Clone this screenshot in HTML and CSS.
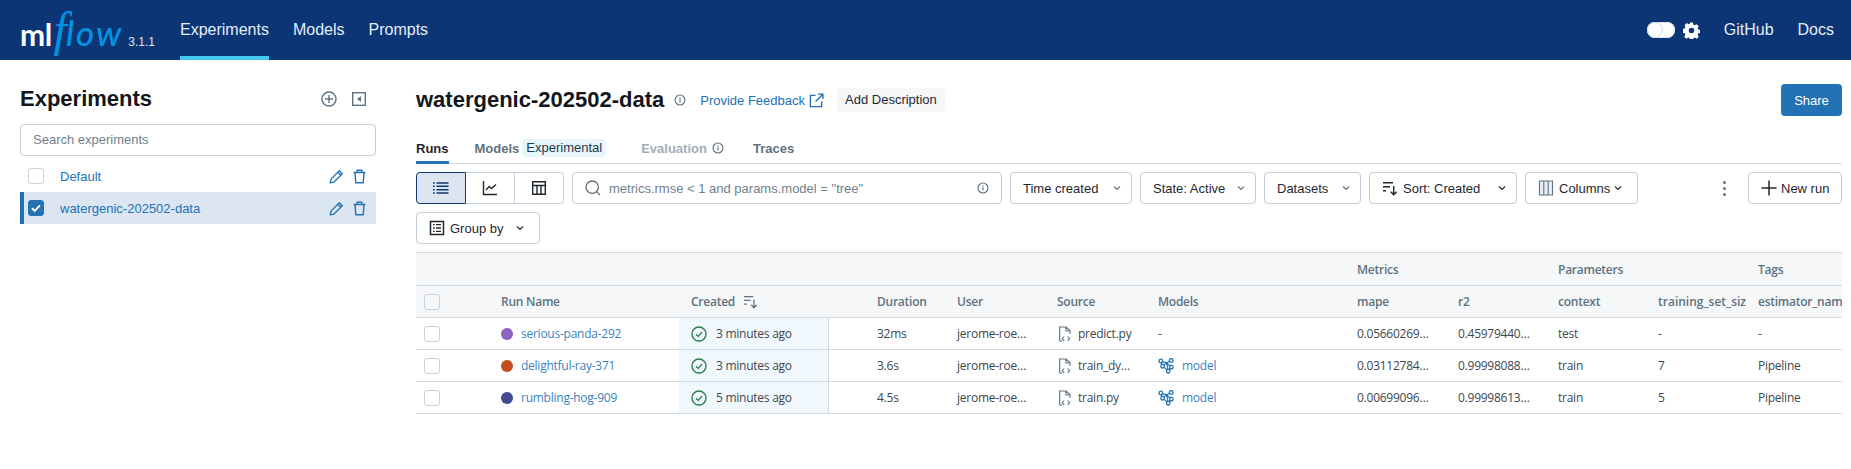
FILE: index.html
```html
<!DOCTYPE html>
<html lang="en">
<head>
  <meta charset="UTF-8">
  <title>MLflow Experiments</title>
  <link rel="stylesheet" href="styles.css">
</head>
<body>

  <svg class="iconDefs">
    <symbol id="i-info" viewBox="0 0 16 16"><circle cx="8" cy="8" r="6.600" fill="none" stroke="currentColor" stroke-width="1.500"/><rect x="7.200" y="7" width="1.600" height="4.200" fill="currentColor"/><rect x="7.200" y="4.400" width="1.600" height="1.600" fill="currentColor"/></symbol>
    <symbol id="i-pencil" viewBox="0 0 16 16"><path d="M11 1.800l3.200 3.200-8.900 8.900-4 .9.800-4z M9.400 3.400l3.200 3.200" fill="none" stroke="currentColor" stroke-width="1.400" stroke-linejoin="round"/></symbol>
    <symbol id="i-trash" viewBox="0 0 16 16"><path d="M1.600 3.700h12.800 M5.400 3.500V1.400h5.200v2.100 M3.200 3.700l.8 11h8l.8-11" fill="none" stroke="currentColor" stroke-width="1.500" stroke-linejoin="round"/></symbol>
    <symbol id="i-chevron" viewBox="0 0 16 16"><path d="M4 6l4 4 4-4" fill="none" stroke="currentColor" stroke-width="1.500"/></symbol>
    <symbol id="i-sort" viewBox="0 0 16 16"><path d="M1 2.700h10 M1 6.700h7 M1 10.700h3 M11.700 6v8.600 M8.800 11.800l2.900 2.900 2.900-2.900" fill="none" stroke="currentColor" stroke-width="1.400"/></symbol>
    <symbol id="i-check" viewBox="0 0 16 16"><circle cx="8" cy="8" r="7" fill="none" stroke="currentColor" stroke-width="1.300"/><path d="M5 8.200l2.200 2.200L11 6.200" fill="none" stroke="currentColor" stroke-width="1.300"/></symbol>
    <symbol id="i-file" viewBox="0 0 16 16"><path d="M5 15H2.700V1h6.500l3.800 3.800V8 M9 1v4h4 M7.200 10.500L5.200 12.700l2 2.100 M10.600 10.500l2 2.200-2 2.100" fill="none" stroke="currentColor" stroke-width="1.100"/></symbol>
    <symbol id="i-model" viewBox="0 0 16 16"><path d="M3 3.200l5.600 1.600 4.600-2.400 M3 3.200l1.600 5 5.600 4.400 M4.600 8.200l4-3.400 4.600 4.400-3 3.400 M8.600 4.800l1.600 7.800" fill="none" stroke="currentColor" stroke-width="1.200"/><g fill="#fff" stroke="currentColor" stroke-width="1.300"><circle cx="2.800" cy="3" r="1.800"/><circle cx="13.200" cy="2.400" r="1.800"/><circle cx="4.600" cy="8.200" r="1.800"/><circle cx="13.400" cy="9.200" r="1.800"/><circle cx="10.200" cy="13.200" r="1.800"/></g></symbol>
  </svg>

  <header class="topBar">
    <div class="logo"><span class="logoMl">ml</span><span class="logoF">f</span><span class="logoFlow">low</span><span class="logoVersion">3.1.1</span></div>
    <nav class="topNav">
      <a class="navItem navItemActive">Experiments</a>
      <a class="navItem">Models</a>
      <a class="navItem">Prompts</a>
    </nav>
    <div class="topRight">
      <span class="toggle"><span class="toggleKnob"></span></span>
      <svg class="gear" viewBox="0 0 16 16"><path fill="#fff" fill-rule="evenodd" d="M6.600.5h2.800l.4 2 1.300.6 1.800-1.100 2 2-1.100 1.800.6 1.300 2 .4v2.800l-2 .4-.6 1.300 1.100 1.800-2 2-1.800-1.100-1.300.6-.4 2H6.600l-.4-2-1.300-.6-1.800 1.100-2-2 1.100-1.800-.6-1.300-2-.4V6.500l2-.4.6-1.300L1.500 3l2-2 1.800 1.100 1.300-.6zM8 5.400a2.600 2.600 0 1 0 0 5.200 2.600 2.600 0 0 0 0-5.200z"/></svg>
      <a class="navItem navGithub">GitHub</a>
      <a class="navItem">Docs</a>
    </div>
  </header>

  <div class="page">
    <aside class="sidebar">
      <div class="sideHead">
        <h2>Experiments</h2>
        <svg class="sideIcon" viewBox="0 0 16 16"><circle cx="8" cy="8" r="7" fill="none" stroke="currentColor" stroke-width="1.400"/><path d="M8 4v8M4 8h8" stroke="currentColor" stroke-width="1.400"/></svg>
        <svg class="sideIcon" viewBox="0 0 16 16"><rect x="1.700" y="1.700" width="12.600" height="12.600" fill="none" stroke="currentColor" stroke-width="1.400"/><path d="M10 5v6L6 8z" fill="currentColor"/></svg>
      </div>
      <div class="searchBox">Search experiments</div>
      <div class="expList">
        <div class="expRow">
          <span class="checkbox"></span>
          <a class="expName">Default</a>
          <svg class="expIcon"><use href="#i-pencil"/></svg>
          <svg class="expIcon"><use href="#i-trash"/></svg>
        </div>
        <div class="expRow expRowActive">
          <span class="checkbox checkboxOn"><svg viewBox="0 0 16 16"><path d="M3.500 8.300l3 3 6-6.300" fill="none" stroke="#fff" stroke-width="2.200"/></svg></span>
          <a class="expName">watergenic-202502-data</a>
          <svg class="expIcon"><use href="#i-pencil"/></svg>
          <svg class="expIcon"><use href="#i-trash"/></svg>
        </div>
      </div>
    </aside>

    <main class="content">
      <div class="titleRow">
        <h1>watergenic-202502-data</h1>
        <svg class="titleInfo"><use href="#i-info"/></svg>
        <a class="feedback">Provide Feedback
          <svg viewBox="0 0 16 16"><path d="M7 2.500H1.500v12h12V9 M9.500 1.200h5.300v5.300 M14.500 1.500L7 9" fill="none" stroke="currentColor" stroke-width="1.500"/></svg>
        </a>
        <span class="addDesc">Add Description</span>
        <button class="shareBtn">Share</button>
      </div>

      <div class="tabs">
        <a class="tab tabActive">Runs</a>
        <a class="tab tabModels">Models <span class="tag">Experimental</span></a>
        <a class="tab tabOff">Evaluation <svg><use href="#i-info"/></svg></a>
        <a class="tab">Traces</a>
      </div>

      <div class="toolbar">
        <div class="viewGroup">
          <span class="viewBtn viewBtnOn"><svg viewBox="0 0 16 16"><path d="M3.500 3h12M3.500 6.300h12M3.500 9.700h12M3.500 13h12M0 3h1.700M0 6.300h1.700M0 9.700h1.700M0 13h1.700" stroke="#0e3a6b" stroke-width="1.400"/></svg></span>
          <span class="viewBtn"><svg viewBox="0 0 16 16"><path d="M1.500 1v13.500H15 M4 10l3.300-3.500 2.200 2L14 4.500" fill="none" stroke="#1f272d" stroke-width="1.400"/></svg></span>
          <span class="viewBtn"><svg viewBox="0 0 16 16"><path d="M1.700 1.700h12.600v12.600H1.700z M1.700 5.500h12.600 M6 5.500v8.800 M10 5.500v8.800" fill="none" stroke="#1f272d" stroke-width="1.400"/></svg></span>
        </div>
        <div class="searchRuns">
          <svg class="searchIcon" viewBox="0 0 16 16"><circle cx="7.200" cy="7.200" r="6.200" fill="none" stroke="currentColor" stroke-width="1.300"/><path d="M11.600 11.600l3.400 3.400" stroke="currentColor" stroke-width="1.300"/></svg>
          <span class="searchText">metrics.rmse &lt; 1 and params.model = "tree"</span>
          <svg class="searchInfo"><use href="#i-info"/></svg>
        </div>
        <span class="toolBtn btnTime">Time created <svg class="chev chevLight"><use href="#i-chevron"/></svg></span>
        <span class="toolBtn btnState">State: Active <svg class="chev chevLight"><use href="#i-chevron"/></svg></span>
        <span class="toolBtn btnData">Datasets <svg class="chev chevLight"><use href="#i-chevron"/></svg></span>
        <span class="toolBtn btnSort"><svg class="btnIcon"><use href="#i-sort"/></svg> Sort: Created <svg class="chev"><use href="#i-chevron"/></svg></span>
        <span class="toolBtn btnCols"><svg class="btnIcon" viewBox="0 0 16 16"><path d="M1.500 1h13v14h-13z M5.800 1v14 M10.200 1v14" fill="#e8eef4" stroke="#5f7281" stroke-width="1.100"/></svg> Columns <svg class="chev chevTight"><use href="#i-chevron"/></svg></span>
        <span class="dots"><i></i><i></i><i></i></span>
        <span class="toolBtn btnNew"><svg class="btnIcon" viewBox="0 0 16 16"><path d="M8 0.500v15M0.500 8h15" stroke="#1f272d" stroke-width="1.500"/></svg> New run</span>
      </div>

      <div class="toolbar2">
        <span class="toolBtn btnGroup"><svg class="btnIcon" viewBox="0 0 16 16"><path d="M1.500 1.500h13v13h-13z" fill="none" stroke="#1f272d" stroke-width="1.500"/><path d="M4 4.700h1.700M7 4.700h5M4 8h1.700M7 8h5M4 11.300h1.700M7 11.300h5" stroke="#1f272d" stroke-width="1.300"/></svg> Group by <svg class="chev"><use href="#i-chevron"/></svg></span>
      </div>

      <div class="runsTable">
        <div class="row rowGroup">
          <span class="c7">Metrics</span><span class="c9">Parameters</span><span class="c11">Tags</span>
        </div>
        <div class="row rowHead">
          <span class="cellCheck"><span class="checkbox checkboxGrey"></span></span>
          <span class="cellName">Run Name</span>
          <span>Created <svg class="headSort"><use href="#i-sort"/></svg></span>
          <span class="cellDur">Duration</span>
          <span>User</span>
          <span>Source</span>
          <span>Models</span>
          <span>mape</span>
          <span>r2</span>
          <span>context</span>
          <span class="cellWide">training_set_size</span>
          <span>estimator_name</span>
        </div>

        <div class="row">
          <span class="cellCheck"><span class="checkbox"></span></span>
          <span class="cellName"><i class="dot dotPurple"></i><a>serious-panda-292</a></span>
          <span class="cellCreated"><svg class="okIcon"><use href="#i-check"/></svg>3 minutes ago</span>
          <span class="cellDur">32ms</span>
          <span>jerome-roe…</span>
          <span><svg class="fileIcon"><use href="#i-file"/></svg>predict.py</span>
          <span>-</span>
          <span>0.05660269…</span>
          <span>0.45979440…</span>
          <span>test</span>
          <span>-</span>
          <span>-</span>
        </div>
        <div class="row">
          <span class="cellCheck"><span class="checkbox"></span></span>
          <span class="cellName"><i class="dot dotOrange"></i><a>delightful-ray-371</a></span>
          <span class="cellCreated"><svg class="okIcon"><use href="#i-check"/></svg>3 minutes ago</span>
          <span class="cellDur">3.6s</span>
          <span>jerome-roe…</span>
          <span><svg class="fileIcon"><use href="#i-file"/></svg>train_dy…</span>
          <span><svg class="modelIcon"><use href="#i-model"/></svg><a>model</a></span>
          <span>0.03112784…</span>
          <span>0.99998088…</span>
          <span>train</span>
          <span>7</span>
          <span>Pipeline</span>
        </div>
        <div class="row">
          <span class="cellCheck"><span class="checkbox"></span></span>
          <span class="cellName"><i class="dot dotNavy"></i><a>rumbling-hog-909</a></span>
          <span class="cellCreated"><svg class="okIcon"><use href="#i-check"/></svg>5 minutes ago</span>
          <span class="cellDur">4.5s</span>
          <span>jerome-roe…</span>
          <span><svg class="fileIcon"><use href="#i-file"/></svg>train.py</span>
          <span><svg class="modelIcon"><use href="#i-model"/></svg><a>model</a></span>
          <span>0.00699096…</span>
          <span>0.99998613…</span>
          <span>train</span>
          <span>5</span>
          <span>Pipeline</span>
        </div>
      </div>
    </main>
  </div>

</body>
</html>
```

FILE: styles.css
```css
html, body {
  height: 100%;
  margin: 0;
  overflow: hidden;
  background: #fff;
  font-family: "Liberation Sans", Arial, sans-serif;
  font-size: 13px;
  color: #1f272d;
}

.iconDefs {
  display: none;
}

a {
  text-decoration: none;
}

/* top bar */
.topBar {
  display: flex;
  align-items: stretch;
  height: 60px;
  padding: 0 17px 0 20px;
  background: #0b3574;
  color: #e4eefa;
}

.logo {
  display: flex;
  align-items: baseline;
  width: 160px;
  padding-top: 9px;
  box-sizing: border-box;
  line-height: 42px;
  overflow: hidden;
}

.logoMl {
  font-family: Lato, sans-serif;
  font-size: 30px;
  font-weight: 700;
  color: #fff;
  letter-spacing: -0.5px;
}

.logoF {
  font-family: "Liberation Serif", serif;
  font-size: 48px;
  font-style: italic;
  color: #0194e2;
  margin-left: 2px;
}

.logoFlow {
  font-family: Lato, sans-serif;
  font-size: 35px;
  font-style: italic;
  font-weight: 500;
  color: #0194e2;
  letter-spacing: 2px;
  margin-left: -1px;
}

.logoVersion {
  font-size: 12px;
  color: #dfe5ec;
  margin-left: 5px;
}

.topNav {
  display: flex;
  gap: 24px;
}

.navItem {
  display: flex;
  align-items: center;
  font-size: 16px;
  color: #e4eefa;
  box-sizing: border-box;
  border-bottom: 4px solid transparent;
  padding-top: 4px;
}

.navItemActive {
  border-bottom-color: #43c9ed;
}

.topRight {
  display: flex;
  align-items: center;
  gap: 24px;
  margin-left: auto;
}

.toggle {
  display: flex;
  width: 28px;
  height: 16px;
  margin-right: -16px;
  border-radius: 8px;
  background: #fff;
  box-shadow: inset 0 0 0 1px #dfe5ec;
}

.toggleKnob {
  width: 16px;
  height: 16px;
  box-sizing: border-box;
  border-radius: 50%;
  background: #fff;
  border: 1px solid #cfd8e2;
}

.gear {
  width: 17px;
  height: 17px;
}

/* page */
.page {
  display: flex;
}

.sidebar {
  width: 356px;
  margin-left: 20px;
  padding-top: 24px;
}

.sideHead {
  display: flex;
  align-items: center;
  gap: 14px;
  height: 30px;
  padding-right: 9px;
}

.sideHead h2 {
  flex: 1;
  margin: 0;
  font-size: 22px;
  color: #11171c;
}

.sideIcon {
  width: 16px;
  height: 16px;
  color: #5f7281;
}

.searchBox {
  height: 32px;
  margin-top: 10px;
  padding-left: 12px;
  line-height: 30px;
  box-sizing: border-box;
  border: 1px solid #c0cdd8;
  border-radius: 4px;
  color: #6f7f8c;
}

.expList {
  margin-top: 4px;
}

.expRow {
  display: flex;
  align-items: center;
  gap: 8px;
  height: 32px;
  padding: 0 9px 0 8px;
}

.expRowActive {
  background: #dbe6f2;
  box-shadow: inset 4px 0 0 #2272b4;
}

.expName {
  flex: 1;
  margin-left: 8px;
  color: #2272b4;
}

.expIcon {
  width: 15px;
  height: 15px;
  color: #2272b4;
}

.checkbox {
  display: inline-block;
  width: 16px;
  height: 16px;
  box-sizing: border-box;
  border: 1px solid #c8d3dd;
  border-radius: 3px;
  background: #fff;
}

.checkboxOn {
  background: #2272b4;
  border-color: #2272b4;
}

.checkboxOn svg {
  display: block;
  width: 14px;
  height: 14px;
}

.checkboxGrey {
  background: #f5f7f9;
}

/* main */
.content {
  width: 1426px;
  margin-left: 40px;
}

.titleRow {
  display: flex;
  align-items: center;
  height: 32px;
  margin-top: 24px;
}

.titleRow h1 {
  margin: 0;
  font-size: 22px;
  color: #11171c;
}

.titleInfo {
  width: 12px;
  height: 12px;
  margin-left: 10px;
  color: #5f7281;
}

.feedback {
  display: flex;
  align-items: center;
  gap: 4px;
  margin-left: 14px;
  color: #2272b4;
}

.feedback svg {
  width: 15px;
  height: 15px;
}

.addDesc {
  margin-left: 13px;
  padding: 0 8px;
  line-height: 24px;
  background: #f5f7f9;
  border-radius: 4px;
}

.shareBtn {
  margin-left: auto;
  width: 61px;
  height: 32px;
  background: #2272b4;
  color: #fff;
  border: none;
  border-radius: 4px;
  font: inherit;
}

.tabs {
  display: flex;
  gap: 26px;
  height: 32px;
  margin-top: 15px;
  border-bottom: 1px solid #d1d9e1;
}

.tab {
  display: flex;
  align-items: center;
  height: 33px;
  box-sizing: border-box;
  padding-top: 1px;
  font-weight: bold;
  color: #5f7281;
}

.tabActive {
  color: #1f272d;
  border-bottom: 3px solid #2272b4;
  padding-top: 4px;
}

.tabModels {
  gap: 3px;
  margin-right: 9px;
}

.tag {
  font-weight: normal;
  color: #1f3a4d;
  background: #e6f6fb;
  padding: 0 4px;
  border-radius: 4px;
  line-height: 18px;
}

.tabOff {
  color: #a3aeb8;
  gap: 5px;
  margin-right: 3px;
}

.tabOff svg {
  width: 12px;
  height: 12px;
  color: #5f7281;
}

.toolbar {
  display: flex;
  align-items: center;
  gap: 8px;
  margin-top: 8px;
  height: 32px;
}

.toolbar2 {
  display: flex;
  margin-top: 8px;
  height: 32px;
}

.viewGroup {
  display: flex;
}

.viewBtn {
  display: flex;
  align-items: center;
  justify-content: center;
  width: 49px;
  height: 32px;
  box-sizing: border-box;
  border: 1px solid #c0cdd8;
  border-left: none;
}

.viewBtn svg {
  width: 16px;
  height: 16px;
}

.viewBtn:last-child {
  border-radius: 0 4px 4px 0;
}

.viewBtnOn {
  width: 50px;
  background: #dbe6f2;
  border: 1px solid #0e3a6b;
  border-radius: 4px 0 0 4px;
}

.searchRuns {
  display: flex;
  align-items: center;
  width: 430px;
  height: 32px;
  box-sizing: border-box;
  padding: 0 12px;
  border: 1px solid #c0cdd8;
  border-radius: 4px;
  color: #5f7281;
}

.searchIcon {
  width: 16px;
  height: 16px;
}

.searchText {
  flex: 1;
  margin-left: 8px;
  color: #6f7f8c;
}

.searchInfo {
  width: 12px;
  height: 12px;
}

.toolBtn {
  display: inline-flex;
  align-items: center;
  height: 32px;
  box-sizing: border-box;
  border: 1px solid #c0cdd8;
  border-radius: 4px;
  padding: 0 8px 0 12px;
  gap: 5px;
  white-space: nowrap;
}

.btnTime { width: 122px; justify-content: space-between; }
.btnState { width: 116px; justify-content: space-between; }
.btnData { width: 97px; justify-content: space-between; }
.btnSort { width: 148px; }
.btnCols { width: 113px; }

.btnSort .chev {
  margin-left: auto;
}

.btnIcon {
  width: 16px;
  height: 16px;
  flex: none;
}

.chev {
  width: 12px;
  height: 12px;
  flex: none;
}

.chevLight {
  color: #5f7281;
}

.chevTight {
  margin-left: -3px;
}

.dots {
  display: flex;
  flex-direction: column;
  gap: 3px;
  margin-left: auto;
  margin-right: 14px;
}

.dots i {
  width: 3px;
  height: 3px;
  border-radius: 50%;
  background: #5f7281;
}

.btnNew {
  width: 94px;
  padding-left: 12px;
  gap: 4px;
}

.btnGroup {
  width: 124px;
}

.btnGroup .chev {
  margin-left: 6px;
}

/* runs table */
.runsTable {
  margin-top: 8px;
  overflow: hidden;
  color: #3c4750;
  font-family: "Open Sans", sans-serif;
  font-size: 12px;
  letter-spacing: -0.25px;
}

.row {
  display: grid;
  grid-template-columns: 77px 186px 150px 116px 100px 101px 199px 101px 100px 100px 100px 100px;
  height: 32px;
  border-bottom: 1px solid #d1d9e1;
  box-sizing: border-box;
}

.row > span {
  display: flex;
  align-items: center;
  padding-left: 12px;
  overflow: hidden;
  white-space: nowrap;
}

.rowGroup {
  height: 34px;
  background: #f5f7f9;
  border-top: 1px solid #d1d9e1;
  color: #5f7281;
  font-weight: 600;
}

.rowHead {
  background: #f5f7f9;
  color: #5f7281;
  font-weight: 600;
}

.c7 { grid-column: 8; }
.c9 { grid-column: 10; }
.c11 { grid-column: 12; }

.row > .cellCheck {
  padding-left: 8px;
}

.row > .cellName {
  padding-left: 8px;
}

.row > .cellDur {
  padding-left: 48px;
}

.row > .cellWide {
  letter-spacing: 0;
}

.row > .cellCreated {
  background: #f0f7fd;
  border-right: 1px solid #d1d9e1;
}

.row a {
  color: #3a82bf;
}

.dot {
  width: 12px;
  height: 12px;
  border-radius: 50%;
  margin-right: 8px;
  flex: none;
}

.dotPurple { background: #8f62bf; }
.dotOrange { background: #bf4e1f; }
.dotNavy { background: #434a92; }

.headSort {
  width: 15px;
  height: 15px;
  margin-left: 8px;
}

.okIcon {
  width: 16px;
  height: 16px;
  color: #277c43;
  margin-right: 9px;
  flex: none;
}

.fileIcon {
  width: 16px;
  height: 16px;
  margin-right: 5px;
  color: #5f7281;
  flex: none;
}

.modelIcon {
  width: 16px;
  height: 16px;
  margin-right: 8px;
  color: #2272b4;
  flex: none;
}
```
